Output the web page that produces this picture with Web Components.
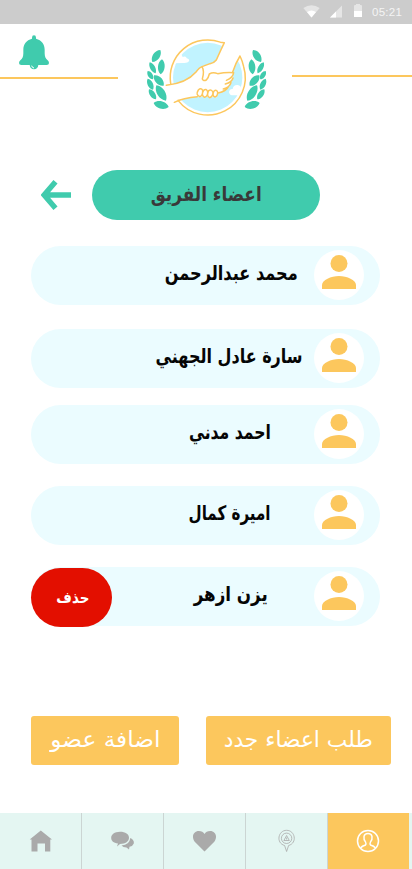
<!DOCTYPE html>
<html lang="ar">
<head>
<meta charset="utf-8">
<title>اعضاء الفريق</title>
<style>
html,body{margin:0;padding:0;background:#fff}
body{width:412px;height:869px;overflow:hidden;font-family:"DejaVu Sans",sans-serif}
</style>
</head>
<body>
<team-screen></team-screen>
<script>
const define=(name,html,setup)=>customElements.define(name,class extends HTMLElement{
  connectedCallback(){
    if(this.shadowRoot)return;
    const t=document.createElement('template');
    t.innerHTML=html;
    this.attachShadow({mode:'open'}).append(t.content.cloneNode(true));
    if(setup)setup(this,this.shadowRoot);
  }
});

/* One line of Arabic text, condensed or widened to the width attribute. */
define('fit-text',`<style>
:host{display:block;direction:rtl;white-space:nowrap;line-height:30px;height:30px}
span{display:inline-block;transform-origin:100% 50%}
</style><span></span>`,(el,root)=>{
  const s=root.querySelector('span');
  s.textContent=el.getAttribute('text');
  const w=+el.getAttribute('width');
  el.style.width=w+'px';
  s.style.transform='scaleX('+w/s.getBoundingClientRect().width+')';
});

define('status-bar',`<style>
:host{display:flex;height:24px;background:#ccc;align-items:center;justify-content:flex-end;box-sizing:border-box;padding-right:10px;color:#f4f4f4;font:11.500px/24px "Liberation Sans",sans-serif}
svg{display:block;margin-top:-2px}
.w{margin-right:10px}.s{margin-right:11px}.b{margin-right:10px}
span{width:30px;white-space:nowrap;letter-spacing:.25px}
</style>
<svg class="w" width="17" height="13" viewBox="0 0 17 13"><path d="M.3 3Q8.500-2.500 16.700 3L8.500 12.500z" fill="#e5e5e5"/><path d="M4 7Q8.500 4 13 7L8.500 12.500z" fill="#fff"/></svg>
<svg class="s" width="13" height="13" viewBox="0 0 13 13"><path d="M12 .5V12.500H0z" fill="#e5e5e5"/><path d="M6 6.500V12.500H0z" fill="#fff"/></svg>
<svg class="b" width="8" height="14" viewBox="0 0 8 14"><path d="M0 2Q0 1 1 1H2V0H6V1H7Q8 1 8 2V7H0z" fill="#e5e5e5"/><path d="M0 7H8V13H0z" fill="#fff"/></svg>
<span>05:21</span>`);

define('bell-icon',`<style>:host{display:block;width:30px;height:35px}svg{display:block}</style>
<svg width="30" height="35" viewBox="0 0 90 105"><path fill="#40cbad" d="M39 8Q39 1 45 1Q51 1 51 8V11C68 15 77 28 77 44V55C77 65 80 72 86 76Q90 79 90 84Q90 90 83 90H7Q0 90 0 84Q0 79 4 76C10 72 13 65 13 55V44C13 28 22 15 39 11z"/><path fill="#40cbad" d="M32 89H58Q57 102 45 103Q33 102 32 89z"/><path d="M38 92Q39 98 45 99" fill="none" stroke="#fff" stroke-width="3"/></svg>`);

define('care-logo',`<style>:host{display:block;width:127px;height:85px}svg{display:block}</style>
<svg width="127" height="85" viewBox="429 105 381 255">
<circle cx="623" cy="232.500" r="104" fill="#c1f3ff"/>
<path fill="#fff" d="M498 256Q560 249 586 218L604 199L645 187L676 115L735 120L720 168L699 214L698 238L682 263L656 280L650 292L592 290Q555 293 522 308L480 285z"/>
<g fill="#fff"><path d="M518 190Q525 181 533 180L532 162Q544 159 548 171Q559 167 560 175Q570 178 567 184Q563 190 550 189z"/><path d="M687 276Q689 266 698 267Q700 254 713 255Q724 256 723 268L731 271L724 286H696Q688 285 687 276z"/></g>
<g fill="none" stroke="#fcc75d" stroke-width="4.500" stroke-linecap="round" stroke-linejoin="round">
<path d="M512 250A112.500 112.500 0 0 1 661 126.500L673 128Q661 153 649 180Q643 188 630 191L606 200Q598 202 588 216Q560 249 499 256"/>
<path d="M523 307Q550 293 592 290M534 301A112.500 112.500 0 0 0 731 200Q727 182 720 168Q706 191 698 216"/>
<path d="M606 200Q614 213 607 237Q610 244 619 240Q626 232 628 222Q639 215 653 221Q678 216 701 218Q699 233 679 241M699 234Q696 247 676 252M693 248Q690 261 670 267M685 260Q679 274 654 279"/>
<path d="M595 270Q603 262 608 271Q609 287 599 290Q586 285 595 270zM611 271Q619 264 623 275Q624 289 614 292Q602 286 611 271zM626 272Q634 266 639 277Q639 290 629 293Q618 288 626 272zM642 273Q650 267 653 277Q653 289 645 291Q635 287 642 273z"/>
</g>
<g class="l" fill="#40cbad"></g>
<g class="r" fill="#40cbad" transform="translate(1240 0) scale(-1 1)"></g>
</svg>`,(el,root)=>{
  /* Leaves: tip, base, width. */
  const leaves=[[481,150,457,186,21],[486,178,482,223,20],[449,187,467,220,15],[443,213,459,238,14],[462,226,491,257,21],[443,236,459,269,16],[469,256,498,302,24],[447,268,468,298,16],[461,309,506,321,22]];
  const d=leaves.map(([x,y,X,Y,w])=>{
    const dx=X-x,dy=Y-y,n=Math.hypot(dx,dy),ox=-dy/n*w*.67,oy=dx/n*w*.67;
    const p=(t,s)=>(x+dx*t+ox*s)+' '+(y+dy*t+oy*s);
    return 'M'+p(0,0)+'C'+p(.22,1)+' '+p(.78,1)+' '+p(1,0)+'C'+p(.78,-1)+' '+p(.22,-1)+' '+p(0,0)+'z';
  }).join('');
  for(const g of root.querySelectorAll('.l,.r')){
    const path=document.createElementNS('http://www.w3.org/2000/svg','path');
    path.setAttribute('d',d);
    g.append(path);
  }
});

define('app-header',`<style>
:host{display:grid;grid-template-columns:118px 174px 120px;height:104px}
.l{padding:11px 0 0 19px}
.l i{margin:7px 0 0 -19px}
.r{padding-top:51px}
i{display:block;height:2px;background:#fcc75d}
care-logo{margin:11px 0 0 25px}
</style>
<div class="l"><bell-icon></bell-icon><i></i></div><care-logo></care-logo><div class="r"><i></i></div>`);

define('page-title',`<style>
:host{display:flex;height:50px;margin:42px 0 0 41px;gap:21px;align-items:center}
div{width:228px;height:50px;border-radius:25px;background:#40cbad;display:flex;justify-content:center;box-sizing:border-box;padding-top:9px;color:#393939;font-size:20px;font-weight:bold}
</style>
<svg width="30" height="30" viewBox="0 0 30 30"><path d="M14.500 1.800L3.200 15L14.500 28.200M3 15H30" fill="none" stroke="#40cbad" stroke-width="5.400"/></svg>
<div><fit-text text="اعضاء الفريق" width="111"></fit-text></div>`);

define('user-avatar',`<style>:host{display:block;width:50px;height:50px;border-radius:50%;background:#fff}svg{display:block}</style>
<svg width="50" height="50" viewBox="0 0 50 50"><circle cx="25" cy="13.600" r="8.500" fill="#fcc75d"/><path d="M8 39V35C8 30 17 26 25 26S42 30 42 35V39z" fill="#fcc75d"/></svg>`);

define('member-row',`<style>
:host{display:flex;flex-direction:row-reverse;width:349px;height:59px;margin-left:31px;border-radius:29.500px;background:#ebfcff;box-sizing:border-box;padding:4px 16px 0 0;font-size:20px;font-weight:bold;color:#050505}
fit-text{margin-top:8px}
button{appearance:none;border:0;margin:-3px auto 0 0;width:81px;height:59px;border-radius:29.500px;background:#e30f00;color:#fff;font:bold 16px "DejaVu Sans",sans-serif;padding:0 23px 0 25px}
button fit-text{margin-top:0}
</style>
<user-avatar></user-avatar><fit-text></fit-text><slot></slot>`,(el,root)=>{
  const w=+el.getAttribute('w'),end=+el.getAttribute('end');
  const old=root.querySelector('fit-text'),f=document.createElement('fit-text');
  f.setAttribute('text',el.getAttribute('name'));
  f.setAttribute('width',w);
  f.style.marginRight=(314-end)+'px';
  old.replaceWith(f);
  if(el.hasAttribute('removable')){
    const b=document.createElement('button');
    b.innerHTML='<fit-text text="حذف" width="33"></fit-text>';
    root.append(b);
  }
});

define('action-button',`<style>
:host{display:flex;justify-content:center;box-sizing:border-box;height:49px;border-radius:3px;background:#fcc75d;color:#fff;font-size:22px;padding-top:9px}
</style><slot></slot>`);

define('nav-item',`<style>
:host{display:flex;align-items:center;justify-content:center;box-sizing:border-box;height:56px;background:#e4f6f2;border-right:1px solid #cbd5d3}
:host([active]){background:#fcc75d;border:0;padding-right:1px}
</style><slot></slot>`);

define('bottom-nav',`<style>
:host{display:grid;grid-template-columns:82px 82px 82px 82px 81px 3px;height:56px;margin-top:48px;background:#e4f6f2}
svg{display:block}
</style>
<nav-item><svg width="24" height="24" viewBox="0 0 24 24"><path d="M11.800 1.500L23 10.500H21.300V22.500H16V14.500H8.500V22.500H2.500V10.500H.7z" fill="#aaa"/></svg></nav-item>
<nav-item><svg width="24" height="24" viewBox="0 0 24 24"><path d="M9 2.800C14.500 2.800 18 5.300 18 8.800S14.500 15 9 15L6 17.500L7 14.600C2.500 14 .2 12 .2 8.800S3.500 2.800 9 2.800z" fill="#aaa"/><path d="M19.300 9Q23.500 11 22.800 14.500Q22 17 18.500 17.800L18 20.500L15.500 18.500Q12 18.500 10.500 16.500Q18.500 16 19.300 9z" fill="#aaa"/></svg></nav-item>
<nav-item><svg width="26" height="24" viewBox="0 0 26 24"><path d="M12.500 22.500L2.500 12.500C-1 7 2 2 6.800 2C9.500 2 11.500 3 12.500 5C13.500 3 15.500 2 18.200 2C23 2 26 7 22.500 12.500z" fill="#aaa"/></svg></nav-item>
<nav-item><svg width="18" height="24" viewBox="0 0 18 24"><g fill="none" stroke="#aaa" stroke-width=".8" transform="translate(-.4 0)"><path d="M7 16.500C-2 14 .500 1.300 9 1.300S20 14 11 16.500L9 22.500z"/><circle cx="9" cy="9.300" r="5.200"/><path d="M9 6.500L11.700 11.500H6.300zM9 8.500V10.500"/></g></svg></nav-item>
<nav-item active><svg width="24" height="24" viewBox="0 0 24 24"><g fill="none" stroke="#fff" stroke-width="1.500"><circle cx="12" cy="12" r="10.500"/><path d="M4.500 19Q6 17 9.500 16Q10.500 15 9.500 13Q7.500 11 8 7.500Q8.500 4.500 12 4.500T16 7.500Q16.500 11 14.500 13Q13.500 15 14.500 16Q18 17 19.500 19"/></g></svg></nav-item>`);

define('team-screen',`<style>
:host{display:block;width:412px;height:869px;background:#fff}
.list{display:grid;grid-template-rows:83px 76px 81px 81px 59px;margin-top:26px}
.actions{display:grid;grid-template-columns:148px 185px;gap:27px;margin:90px 0 0 31px}
</style>
<status-bar></status-bar>
<app-header></app-header>
<page-title></page-title>
<div class="list">
<member-row name="محمد عبدالرحمن" w="133" end="297.500"></member-row>
<member-row name="سارة عادل الجهني" w="147" end="303"></member-row>
<member-row name="احمد مدني" w="82" end="271"></member-row>
<member-row name="اميرة كمال" w="82" end="271"></member-row>
<member-row name="يزن ازهر" w="74" end="268" removable></member-row>
</div>
<div class="actions">
<action-button><fit-text text="اضافة عضو" width="110"></fit-text></action-button>
<action-button><fit-text text="طلب اعضاء جدد" width="149"></fit-text></action-button>
</div>
<bottom-nav></bottom-nav>`);
</script>
</body>
</html>
